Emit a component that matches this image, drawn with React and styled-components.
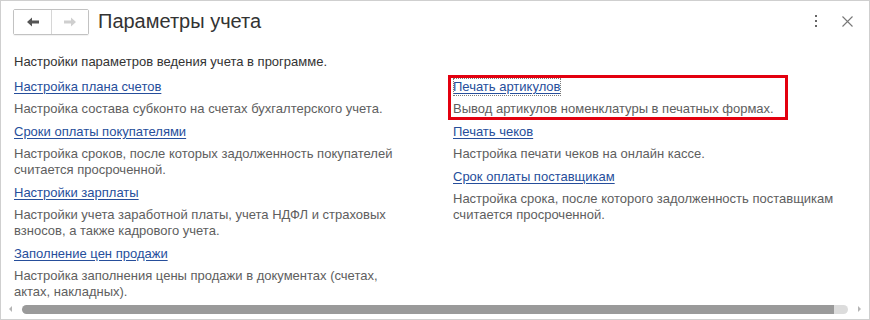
import React from 'react';
import styled, {createGlobalStyle} from "styled-components";

const GlobalStyle = createGlobalStyle`
    body {
        margin: 0;
        background: #fff;
        font-family: "Liberation Sans", Arial, sans-serif;
    }
`;

const Window = styled.div`
    width: 870px;
    height: 320px;
    box-sizing: border-box;
    border: 1px solid #cfcfcf;
    background: #fff;
    display: flex;
    flex-direction: column;
    overflow: hidden;
`;

const Header = styled.div`
    height: 40px;
    display: flex;
    align-items: center;
    padding: 0 12px 0 12px;
`;

const NavGroup = styled.div`
    display: flex;
    height: 24px;
    border: 1px solid #c2c2c2;
    border-radius: 2px;
    margin-top: 1px;
    box-shadow: 0 1px 1px rgba(0, 0, 0, 0.06);
`;

const NavButton = styled.div`
    width: ${p => p.$w}px;
    display: flex;
    align-items: center;
    justify-content: center;
    background: #fff;
    & + & {
        border-left: 1px solid #d6d6d6;
    }
`;

const Title = styled.h1`
    margin: 0 0 0 9px;
    font-size: 20px;
    font-weight: normal;
    color: #333;
    flex: 1;
`;

const ToolIcon = styled.div`
    width: 20px;
    height: 20px;
    display: flex;
    align-items: center;
    justify-content: center;
    margin-left: ${p => p.$ml}px;
`;

const Content = styled.div`
    flex: 1;
    padding: 13px 13px 0 13px;
    display: flex;
    flex-direction: column;
`;

const Intro = styled.div`
    font-size: 13px;
    line-height: 16px;
    color: #333;
    margin-bottom: 8px;
`;

const Columns = styled.div`
    display: grid;
    grid-template-columns: 439px 1fr;
`;

const Column = styled.div`
    display: flex;
    flex-direction: column;
    gap: 6px;
`;

const Item = styled.div`
    position: relative;
    display: flex;
    flex-direction: column;
    gap: 5px;
    max-width: 400px;
    ${p => p.$marked && `
        &::after {
            content: "";
            position: absolute;
            left: -5px;
            top: -3px;
            width: 340px;
            height: 45px;
            box-sizing: border-box;
            border: 3px solid #e3000f;
        }
    `}
`;

const Link = styled.a`
    align-self: flex-start;
    font-size: 13px;
    line-height: 18px;
    color: #264e9b;
    text-decoration: underline;
    text-underline-offset: 2px;
    cursor: pointer;
    outline: ${p => p.$focused ? "1px dotted #7a7a7a" : "none"};
    outline-offset: -1px;
`;

const Desc = styled.div`
    font-size: 13px;
    line-height: 16px;
    color: #5e5e5e;
`;

const ScrollBar = styled.div`
    height: 16px;
    display: flex;
    align-items: center;
    padding: 0 8px 2px 8px;
    gap: 6px;
`;

const ScrollArrow = styled.div`
    width: 0;
    height: 0;
    border-top: 3px solid transparent;
    border-bottom: 3px solid transparent;
    ${p => p.$dir === "left"
        ? "border-right: 3px solid #b5b5b5;"
        : "border-left: 3px solid #b5b5b5;"}
`;

const Track = styled.div`
    flex: 1;
    height: 9px;
    display: flex;
    margin: 0 4px;
`;

const Thumb = styled.div`
    flex: 1;
    background: #9a9a9a;
    border-radius: 5px;
`;

const ThumbRest = styled.div`
    width: 14px;
    background: #dcdcdc;
    border-radius: 0 5px 5px 0;
    margin-left: -4px;
`;

const ArrowIcon = ({dir, color}) => (
    <svg width="16" height="12" viewBox="0 0 16 12">
        <g transform={dir === "right" ? "translate(16,0) scale(-1,1)" : undefined}>
            <path d="M2 6 L7 1.5 L7 4.5 L14 4.5 L14 7.5 L7 7.5 L7 10.5 Z" fill={color}/>
        </g>
    </svg>
);

const left = [
    {
        title: "Настройка плана счетов",
        text: "Настройка состава субконто на счетах бухгалтерского учета."
    },
    {
        title: "Сроки оплаты покупателями",
        text: "Настройка сроков, после которых задолженность покупателей считается просроченной."
    },
    {
        title: "Настройки зарплаты",
        text: "Настройки учета заработной платы, учета НДФЛ и страховых взносов, а также кадрового учета."
    },
    {
        title: "Заполнение цен продажи",
        text: "Настройка заполнения цены продажи в документах (счетах, актах, накладных)."
    },
];

const right = [
    {
        title: "Печать артикулов",
        text: "Вывод артикулов номенклатуры в печатных формах.",
        marked: true
    },
    {
        title: "Печать чеков",
        text: "Настройка печати чеков на онлайн кассе."
    },
    {
        title: "Срок оплаты поставщикам",
        text: "Настройка срока, после которого задолженность поставщикам считается просроченной."
    },
];

const renderItems = (items) => items.map(i => (
    <Item key={i.title} $marked={i.marked}>
        <Link $focused={i.marked}>{i.title}</Link>
        <Desc>{i.text}</Desc>
    </Item>
));

export default function App() {
    return (
        <>
            <GlobalStyle/>
            <Window>
                <Header>
                    <NavGroup>
                        <NavButton $w={37}><ArrowIcon dir="left" color="#555"/></NavButton>
                        <NavButton $w={36}><ArrowIcon dir="right" color="#cfcfcf"/></NavButton>
                    </NavGroup>
                    <Title>Параметры учета</Title>
                    <ToolIcon $ml={0}>
                        <svg width="4" height="12" viewBox="0 0 4 12">
                            <rect x="1" y="0" width="2" height="2" fill="#666"/>
                            <rect x="1" y="5" width="2" height="2" fill="#666"/>
                            <rect x="1" y="10" width="2" height="2" fill="#666"/>
                        </svg>
                    </ToolIcon>
                    <ToolIcon $ml={11}>
                        <svg width="11" height="11" viewBox="0 0 11 11">
                            <path d="M0.5 0.5 L10.5 10.5 M10.5 0.5 L0.5 10.5" stroke="#777" strokeWidth="1.1"/>
                        </svg>
                    </ToolIcon>
                </Header>
                <Content>
                    <Intro>Настройки параметров ведения учета в программе.</Intro>
                    <Columns>
                        <Column>{renderItems(left)}</Column>
                        <Column>{renderItems(right)}</Column>
                    </Columns>
                </Content>
                <ScrollBar>
                    <ScrollArrow $dir="left"/>
                    <Track>
                        <Thumb/>
                        <ThumbRest/>
                    </Track>
                    <ScrollArrow $dir="right"/>
                </ScrollBar>
            </Window>
        </>
    );
}
